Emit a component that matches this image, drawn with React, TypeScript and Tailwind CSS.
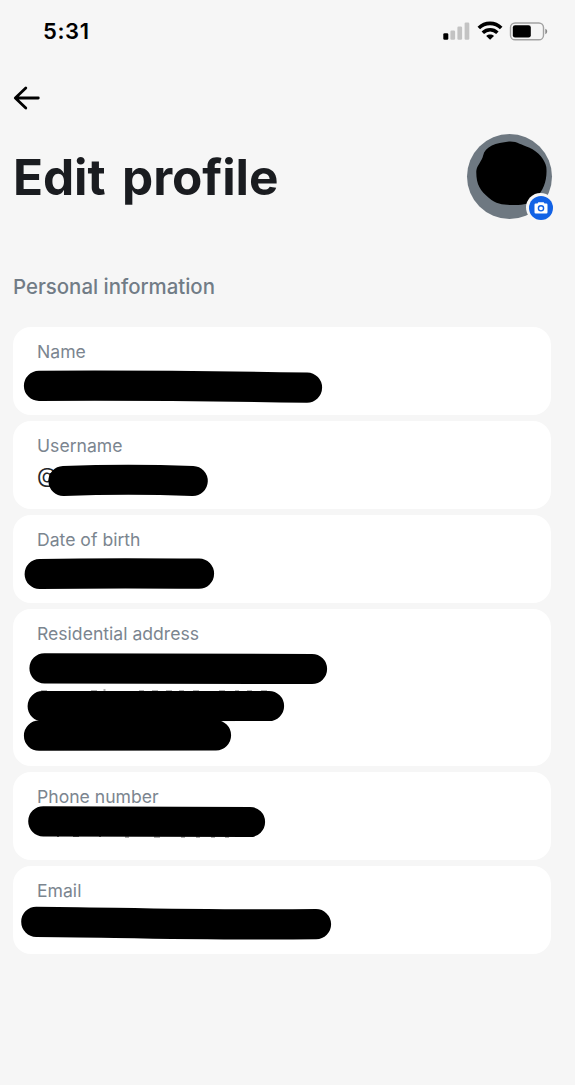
import type { ReactNode } from "react";
import { clsx } from "clsx";

interface Field {
  label: string;
  value?: string;
  tall?: boolean;
  // marker strokes, in card coordinates
  strokes: string[];
  specks?: string;
}

const fields: Field[] = [
  { label: "Name", strokes: ["M26 58.8 Q140 58 294 60.6"] },
  {
    label: "Username",
    value: "@",
    strokes: ["M50.5 60 Q115 57.5 179.7 60"],
  },
  { label: "Date of birth", strokes: ["M26.7 59 Q90 58 186 58.7"] },
  {
    label: "Residential address",
    tall: true,
    strokes: [
      "M31.5 59.3 L299 60",
      "M29.7 97.2 L256 97",
      "M26 126.7 L203 126.3",
    ],
    specks:
      "M28 82h6M78 82h6M90.5 81h2M126 82h5M139 82h6M153 82h6M166 82h5M180 82h6M206 82h6M222 82h4M234 82h5M248 82h6",
  },
  {
    label: "Phone number",
    strokes: ["M30.3 49.3 L237 50"],
    specks: "M44 64.5h2M60 64.5h6M86 64.5h2M112 65h4M141 65h6M168 65h4M183 65h4M198 65h4M212 65h4",
  },
  { label: "Email", strokes: ["M23.3 55.8 C90 56 180 59.5 303 58.2"] },
];

function StatusBar() {
  return (
    <div className="flex h-5 items-center justify-between pr-0.5 pl-[30px]">
      <span className="text-[22px] leading-5 font-semibold tracking-[0.6px] text-black">5:31</span>
      <div className="flex items-center">
        <svg width="106" height="20" viewBox="0 0 106 20">
          <rect x="0.3" y="12.2" width="5" height="6.5" rx="1.3" fill="#000" />
          <g fill="#c3c3c3">
            <rect x="7.4" y="9.5" width="4.7" height="9.2" rx="1.3" />
            <rect x="14.4" y="5.5" width="4.7" height="13.2" rx="1.3" />
            <rect x="21.6" y="1.5" width="4.7" height="17.2" rx="1.3" />
          </g>
          <g fill="none" stroke="#000" strokeWidth="3.6">
            <path d="M35.8 7 C42 0.8 52 0.8 58.2 7" />
            <path d="M39.8 11.7 C44.1 7.7 50.1 7.7 54.4 11.7" />
          </g>
          <path d="M43.2 14.9 C45.4 13 48.8 13 51 14.9 L47.1 18.7 Z" fill="#000" />
          <rect x="67.5" y="2" width="33" height="16.8" rx="4.6" fill="none" stroke="#a2a2a2" strokeWidth="1.4" />
          <rect x="69.8" y="4.3" width="18" height="12.3" rx="2.3" fill="#000" />
          <path d="M102.3 7.8 C104.8 8.6 104.8 12.4 102.3 13.2 Z" fill="#888" />
        </svg>
      </div>
    </div>
  );
}

function Avatar() {
  return (
    <div className="relative -mr-px size-[85px] rounded-full bg-[#6e7881]">
      <svg className="absolute inset-0" width="85" height="85" viewBox="0 0 85 85">
        <path
          d="M9.3 37 C10 31 15 27 16 22 C18 12 29 9 42 7.5 C50 7 54 11 62 13.5 C72 18 78 26 79.3 33 C80.5 45 77 56 69 64 C63 70 57 71 48 71 C38 71 30 71 22 64 C13 57 9 50 9.3 37 Z"
          fill="#000"
        />
      </svg>
      <div className="absolute top-[59px] left-[59px] flex size-[29px] items-center justify-center rounded-full bg-[#f6f6f6]">
        <div className="flex size-6 items-center justify-center rounded-full bg-[#1262e5]">
          <svg width="14" height="12" viewBox="0 0 14 12">
            <path
              d="M4.3 0.3 H9.7 L10.5 1.6 H12.4 Q13.5 1.6 13.5 2.7 V10.2 Q13.5 11.4 12.4 11.4 H1.6 Q0.5 11.4 0.5 10.2 V2.7 Q0.5 1.6 1.6 1.6 H3.5 Z"
              fill="#fff"
            />
            <circle cx="7" cy="6.3" r="2.6" fill="none" stroke="#1262e5" strokeWidth="1.4" />
          </svg>
        </div>
      </div>
    </div>
  );
}

function Card({ tall, children }: { tall?: boolean; children: ReactNode }) {
  return (
    <div
      className={clsx(
        "relative rounded-[18px] bg-white px-6 pt-[13px]",
        tall ? "h-[157px]" : "h-[88px]"
      )}
    >
      {children}
    </div>
  );
}

export default function App() {
  return (
    <div className="h-[1085px] w-[582px] overflow-hidden bg-white font-['Inter',sans-serif]">
      <main className="h-full w-[575px] bg-[#f6f6f6] pt-[21px] pr-6 pl-[13px]">
        <StatusBar />
        <button className="mt-[45px] block h-6" aria-label="Back">
          <svg width="28" height="24" viewBox="0 0 28 24" fill="none" stroke="#000" strokeWidth="2.8" strokeLinecap="round" strokeLinejoin="round">
            <path d="M12.8 2 L2.3 12 L12.8 22 M3 12 H25.3" />
          </svg>
        </button>
        <div className="mt-6 flex h-[85px] items-center justify-between">
          <h1 className="text-[49.5px] leading-[60px] font-bold tracking-[-0.1px] text-[#1a1c20] [word-spacing:5px]">
            Edit profile
          </h1>
          <Avatar />
        </div>
        <h2 className="mt-14 text-[20.4px] leading-6 font-medium text-[#717c86]">
          Personal information
        </h2>
        <div className="mt-7 flex flex-col gap-1.5">
          {fields.map((f) => (
            <Card key={f.label} tall={f.tall}>
              <p className="text-[17.6px] leading-6 text-[#7b858f]">{f.label}</p>
              {f.value && <p className="mt-1.5 text-[21px] leading-6 text-[#24272b]">{f.value}</p>}
              <svg className="absolute inset-0 size-full" fill="none" stroke="#000">
                {f.strokes.map((d) => (
                  <path key={d} d={d} strokeWidth="30.2" strokeLinecap="round" strokeLinejoin="round" />
                ))}
                {f.specks && <path d={f.specks} strokeWidth="1" strokeOpacity="0.6" />}
              </svg>
            </Card>
          ))}
        </div>
      </main>
    </div>
  );
}
